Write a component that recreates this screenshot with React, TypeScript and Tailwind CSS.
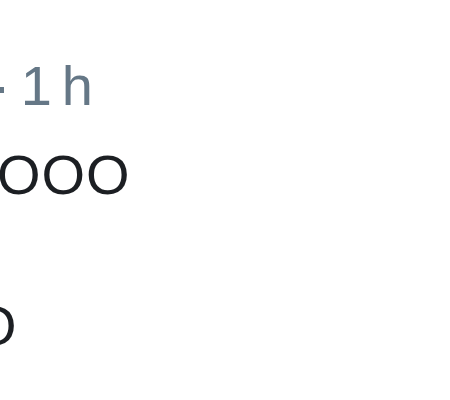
export default function App() {
  return (
    <div className="w-[450px] h-[400px] overflow-hidden bg-white font-['Liberation_Sans',Arial,sans-serif] text-[56px] leading-[89px] pt-[41px]">
      {/* meta line */}
      <div className="ml-[-8px] whitespace-nowrap text-[#657786]">
        <span>·</span>
        <span className="ml-[10px]">1</span>
        <span className="ml-[10px]">h</span>
      </div>

      {/* body */}
      <div className="ml-[-3px] whitespace-nowrap text-[#1c1f23] tracking-[1px]">OOO</div>

      <div className="mt-[62px] ml-[-27px] whitespace-nowrap text-[#1c1f23]">O</div>
    </div>
  );
}
